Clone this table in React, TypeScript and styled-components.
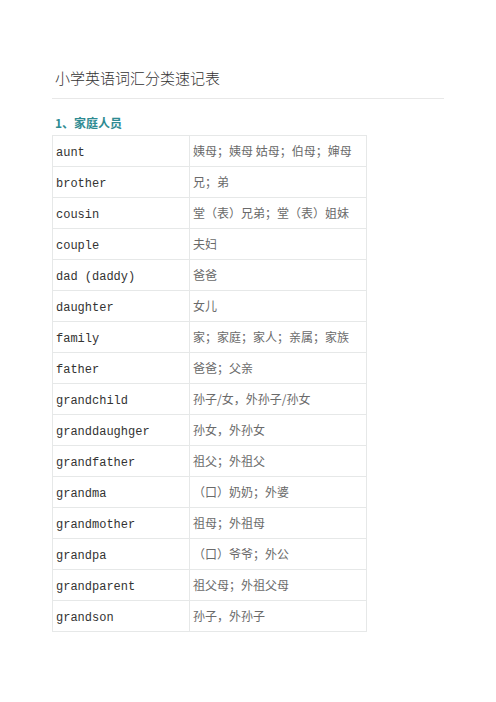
import styled, { createGlobalStyle } from 'styled-components'

const GlobalStyle = createGlobalStyle`
	body {
		margin: 0;
		background: #ffffff;
	}
`

const words: [string, string][] = [
	['aunt', '姨母；姨母 姑母；伯母；婶母'],
	['brother', '兄；弟'],
	['cousin', '堂（表）兄弟；堂（表）姐妹'],
	['couple', '夫妇'],
	['dad (daddy)', '爸爸'],
	['daughter', '女儿'],
	['family', '家；家庭；家人；亲属；家族'],
	['father', '爸爸；父亲'],
	['grandchild', '孙子/女，外孙子/孙女'],
	['granddaughger', '孙女，外孙女'],
	['grandfather', '祖父；外祖父'],
	['grandma', '（口）奶奶；外婆'],
	['grandmother', '祖母；外祖母'],
	['grandpa', '（口）爷爷；外公'],
	['grandparent', '祖父母；外祖父母'],
	['grandson', '孙子，外孙子'],
]

export default function App() {
	return (
		<Page>
			<GlobalStyle />
			<Title>小学英语词汇分类速记表</Title>
			<SectionHeading>1、家庭人员</SectionHeading>
			<WordTable>
				<tbody>
					{words.map(([en, zh]) => (
						<tr key={en}>
							<WordCell>{en}</WordCell>
							<MeaningCell>{zh}</MeaningCell>
						</tr>
					))}
				</tbody>
			</WordTable>
		</Page>
	)
}

const Page = styled.div`
	width: 392px;
	padding: 68px 0 40px 52px;
`

const Title = styled.h1`
	margin: 0;
	padding: 0 0 10px 3px;
	font-family: 'Noto Sans CJK SC', sans-serif;
	font-weight: 300;
	font-size: 15px;
	line-height: 20px;
	color: #333333;
	border-bottom: 1px solid #e8e8e8;
`

const SectionHeading = styled.h2`
	margin: 16px 0 4px;
	padding-left: 3px;
	font-family: 'Noto Sans CJK SC', sans-serif;
	font-weight: 700;
	font-size: 12px;
	line-height: 16px;
	color: #2e8b92;
`

const WordTable = styled.table`
	border-collapse: collapse;
	width: 315px;
	table-layout: fixed;

	td {
		height: 31px;
		box-sizing: border-box;
		border: 1px solid #e6e8e8;
		vertical-align: middle;
		white-space: nowrap;
		line-height: 16px;
	}
`

const WordCell = styled.td`
	width: 137px;
	padding: 3px 3px 0;
	font-family: 'Liberation Mono', monospace;
	font-size: 12px;
	color: #333333;
`

const MeaningCell = styled.td`
	padding: 0 3px 1px;
	font-family: 'Noto Sans CJK SC', sans-serif;
	font-size: 12px;
	color: #6a6a6a;
`
